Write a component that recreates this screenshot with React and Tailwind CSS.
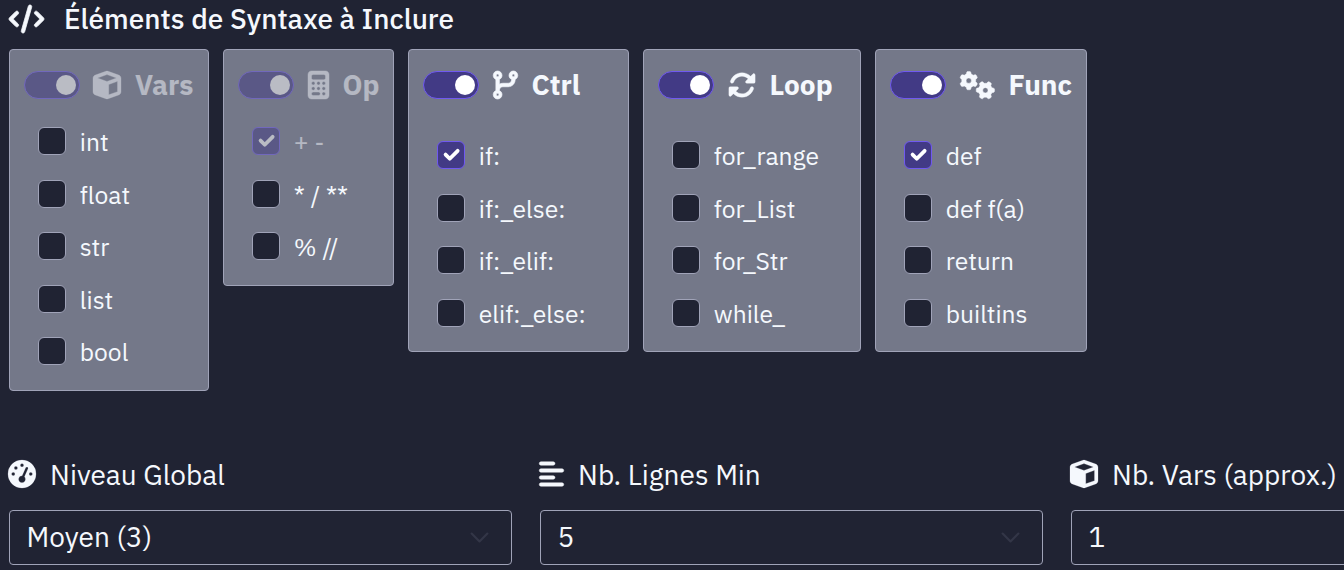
import {
  FaCode,
  FaCube,
  FaCalculator,
  FaCodeBranch,
  FaRotate,
  FaGears,
  FaGaugeHigh,
  FaAlignLeft,
} from "react-icons/fa6";

const categories = [
  {
    name: "Vars", Icon: FaCube, iconClass: "ml-[13px] w-7", weight: 6, width: "w-[200px]", locked: true,
    items: [["int"], ["float"], ["str"], ["list"], ["bool"]],
  },
  {
    name: "Op", Icon: FaCalculator, iconClass: "ml-[13.5px] w-[21px]", weight: 8, width: "w-[171px]", locked: true,
    items: [["+ -", true, true], ["* / **"], ["% //"]],
  },
  {
    name: "Ctrl", Icon: FaCodeBranch, iconClass: "ml-[13.5px] w-[25px]", weight: 12, width: "w-[221px]",
    items: [["if:", true], ["if:_else:"], ["if:_elif:"], ["elif:_else:"]],
  },
  {
    name: "Loop", Icon: FaRotate, iconClass: "ml-[13.5px] w-7", weight: 6, width: "w-[218px]",
    items: [["for_range"], ["for_List"], ["for_Str"], ["while_"]],
  },
  {
    name: "Func", Icon: FaGears, iconClass: "ml-[13.5px] w-[35px]", weight: 8, width: "w-[212px]",
    items: [["def", true], ["def f(a)"], ["return"], ["builtins"]],
  },
];

const selects = [
  { label: "Niveau Global", Icon: FaGaugeHigh, iconClass: "w-7", weight: 4, value: "Moyen (3)" },
  { label: "Nb. Lignes Min", Icon: FaAlignLeft, iconClass: "w-[25px]", weight: 8, value: "5" },
  { label: "Nb. Vars (approx.)", Icon: FaCube, iconClass: "w-7", weight: 4, value: "1" },
];

function Switch() {
  return (
    <span className="flex h-7 w-[56px] shrink-0 items-center justify-end rounded-full border border-[#7059f0] bg-[#423a85] pr-[3px]">
      <span className="size-5 rounded-full bg-white" />
    </span>
  );
}

function Check({ label, checked, disabled }) {
  return (
    <label className={`flex h-[52.5px] items-center ${disabled ? "opacity-50" : ""}`}>
      <span
        className={`flex size-7 items-center justify-center rounded-[6px] border ${
          checked ? "border-[#7059f0] bg-[#423a85]" : "border-[#a0a3b8] bg-[#202333]"
        }`}
      >
        {checked && (
          <svg viewBox="0 0 24 24" className="size-5" fill="none" stroke="#fff" strokeWidth="4.5" strokeLinecap="round" strokeLinejoin="round">
            <path d="M20 7 10.5 16.5 5.5 11.5" />
          </svg>
        )}
      </span>
      <span className="ml-[13.8px] pt-[3px] text-[24.64px] leading-none whitespace-pre">{label}</span>
    </label>
  );
}

function Category({ name, Icon, iconClass, weight, width, locked, items }) {
  return (
    <section className={`${width} shrink-0 rounded-[4px] border border-[#a0a3b8] bg-[#747889] pb-[12.4px]`}>
      <header className={`flex h-[70px] items-center pl-[14px] ${locked ? "opacity-50" : "mb-[14px]"}`}>
        <Switch />
        <Icon strokeWidth={weight} className={`${iconClass} h-7 shrink-0 overflow-visible`} />
        <span className="ml-[14px] text-[28px] leading-none font-bold">{name}</span>
      </header>
      <div className="-mt-[5px] pl-7">
        {items.map(([label, checked, disabled]) => (
          <Check key={label} label={label} checked={checked} disabled={disabled} />
        ))}
      </div>
    </section>
  );
}

function SelectField({ label, Icon, iconClass, weight, value }) {
  return (
    <div className="w-[503px] shrink-0">
      <div className="-ml-[0.6px] flex h-7 items-center">
        <Icon strokeWidth={weight} className={`${iconClass} h-7 shrink-0 overflow-visible`} />
        <span className="ml-[13.7px] pt-[2px] text-[28px] leading-none whitespace-nowrap">{label}</span>
      </div>
      <div className="mt-[22px] flex h-[55px] items-center justify-between rounded-[4px] border border-[#a0a3b8] pr-[21px] pl-[16.5px]">
        <span className="pb-px text-[28px] leading-none">{value}</span>
        <svg viewBox="0 0 24 24" className="size-[21px]" fill="none" stroke="#333647" strokeWidth="2.5" strokeLinecap="round" strokeLinejoin="round">
          <path d="m3 7.5 9 9 9-9" />
        </svg>
      </div>
    </div>
  );
}

export default function App() {
  return (
    <main className="h-[570px] w-full overflow-hidden bg-[#202333] pl-[9px] font-['IBM_Plex_Sans','Noto_Sans',sans-serif] text-[#f5f8fd]">
      <h2 className="flex h-[49px] items-start pt-[5px] text-[28px] font-medium">
        <FaCode strokeWidth="14" className="-ml-[0.5px] h-7 w-[35px] overflow-visible" />
        <span className="ml-[20.5px] leading-none">Éléments de Syntaxe à Inclure</span>
      </h2>
      <div className="flex h-[342px] items-start gap-[14px]">
        {categories.map((c) => (
          <Category key={c.name} {...c} />
        ))}
      </div>
      <div className="mt-[69px] flex gap-7">
        {selects.map((s) => (
          <SelectField key={s.label} {...s} />
        ))}
      </div>
    </main>
  );
}
